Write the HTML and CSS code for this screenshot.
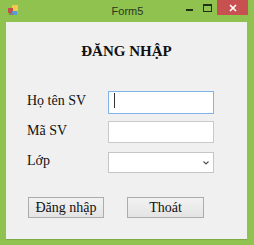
FILE: index.html
```html
<!DOCTYPE html>
<html lang="vi">
<head>
<meta charset="utf-8">
<title>Form5</title>
<link rel="stylesheet" href="styles.css">
</head>
<body>
<div class="window">
  <div class="titlebar">
    <div class="tb-left">
      <svg class="app-icon" width="10" height="11" viewBox="0 0 10 11">
        <rect x="4" y="0" width="6" height="6" fill="#f2c94c"/>
        <rect x="0" y="3" width="5" height="5" fill="#c0504d"/>
        <rect x="4" y="6" width="5" height="4" fill="#5b9bd5"/>
        <rect x="1" y="8" width="4" height="2" fill="#7f7f7f"/>
      </svg>
    </div>
    <span class="title">Form5</span>
    <div class="controls">
      <span class="ctl-min"></span>
      <span class="ctl-max"></span>
      <span class="ctl-close">
        <svg width="8" height="8" viewBox="0 0 8 8"><path d="M1 1L7 7M7 1L1 7" stroke="#fff" stroke-width="1.6"/></svg>
      </span>
    </div>
  </div>
  <div class="client">
    <h1 class="heading">ĐĂNG NHẬP</h1>
    <div class="form">
      <div class="row row-1">
        <label class="label">Họ tên SV</label>
        <div class="textbox focused"><span class="caret"></span></div>
      </div>
      <div class="row row-2">
        <label class="label">Mã SV</label>
        <div class="textbox"></div>
      </div>
      <div class="row row-3">
        <label class="label">Lớp</label>
        <div class="combo">
          <svg class="chev" width="6" height="4" viewBox="0 0 6 4"><path d="M0.5 0.5L3 3L5.5 0.5" fill="none" stroke="#555" stroke-width="1.2"/></svg>
        </div>
      </div>
    </div>
    <div class="buttons">
      <button class="btn btn-login">Đăng nhập</button>
      <button class="btn btn-exit">Thoát</button>
    </div>
  </div>
</div>
</body>
</html>
```

FILE: styles.css
```css
html, body {
  margin: 0;
  padding: 0;
}
body {
  width: 254px;
  height: 245px;
  overflow: hidden;
  background: #8fc24f;
}
.window {
  width: 254px;
  height: 245px;
  background: #8fc24f;
  display: flex;
  flex-direction: column;
}
.titlebar {
  height: 22px;
  display: grid;
  grid-template-columns: 1fr auto 1fr;
  align-items: start;
}
.tb-left {
  padding: 5px 0 0 8px;
}
.app-icon {
  display: block;
}
.title {
  font-family: "Liberation Sans", Arial, sans-serif;
  font-size: 11px;
  line-height: 22px;
  color: #2b3520;
  padding-left: 1px;
}
.controls {
  display: flex;
  justify-content: flex-end;
  align-items: flex-start;
  padding-right: 6px;
}
.ctl-min {
  width: 7px;
  height: 2px;
  background: #22301a;
  margin-top: 9px;
  margin-right: 10px;
}
.ctl-max {
  width: 7px;
  height: 5px;
  border: 1px solid #22301a;
  border-top-width: 2px;
  margin-top: 4px;
  margin-right: 5px;
}
.ctl-close {
  width: 31px;
  height: 15px;
  background: #c75050;
  display: flex;
  align-items: center;
  justify-content: center;
}
.ctl-close svg {
  display: block;
}
.client {
  margin: 0 7px 6px 6px;
  height: 217px;
  background: #f0f0f0;
  box-shadow: 0 1px 0 #7dab43;
}
.heading {
  margin: 0;
  padding-top: 19px;
  font-family: "Liberation Serif", "Times New Roman", serif;
  font-size: 15px;
  font-weight: bold;
  line-height: 20px;
  height: 20px;
  text-align: center;
  color: #111;
}
.form {
  padding-left: 21px;
  margin-top: 30px;
}
.row {
  display: flex;
  align-items: center;
}
.row-1 { height: 23px; }
.row-2 { height: 22px; margin-top: 7px; }
.row-3 { height: 21px; margin-top: 9px; }
.label {
  width: 81px;
  font-family: "Liberation Serif", "Times New Roman", serif;
  font-size: 14px;
  line-height: 16px;
  color: #111;
  padding-bottom: 3px;
}
.textbox, .combo {
  box-sizing: border-box;
  width: 106px;
  height: 100%;
  background: #fff;
  border: 1px solid #c9c9c9;
  position: relative;
}
.textbox.focused {
  border-color: #7eb4ea;
}
.caret {
  position: absolute;
  left: 5px;
  top: 1px;
  width: 1px;
  height: 15px;
  background: #333;
}
.combo {
  display: flex;
  justify-content: flex-end;
  align-items: center;
  padding-right: 4px;
  border-color: #c5c5c5;
}
.chev {
  display: block;
}
.buttons {
  display: flex;
  gap: 23px;
  padding-left: 22px;
  margin-top: 24px;
}
.btn {
  box-sizing: border-box;
  height: 21px;
  padding: 0;
  border: 1px solid #acacac;
  background: linear-gradient(#f2f2f2, #e4e4e4);
  font-family: "Liberation Serif", "Times New Roman", serif;
  font-size: 14px;
  line-height: 19px;
  color: #111;
}
.btn-login { width: 76px; }
.btn-exit { width: 77px; }
```
